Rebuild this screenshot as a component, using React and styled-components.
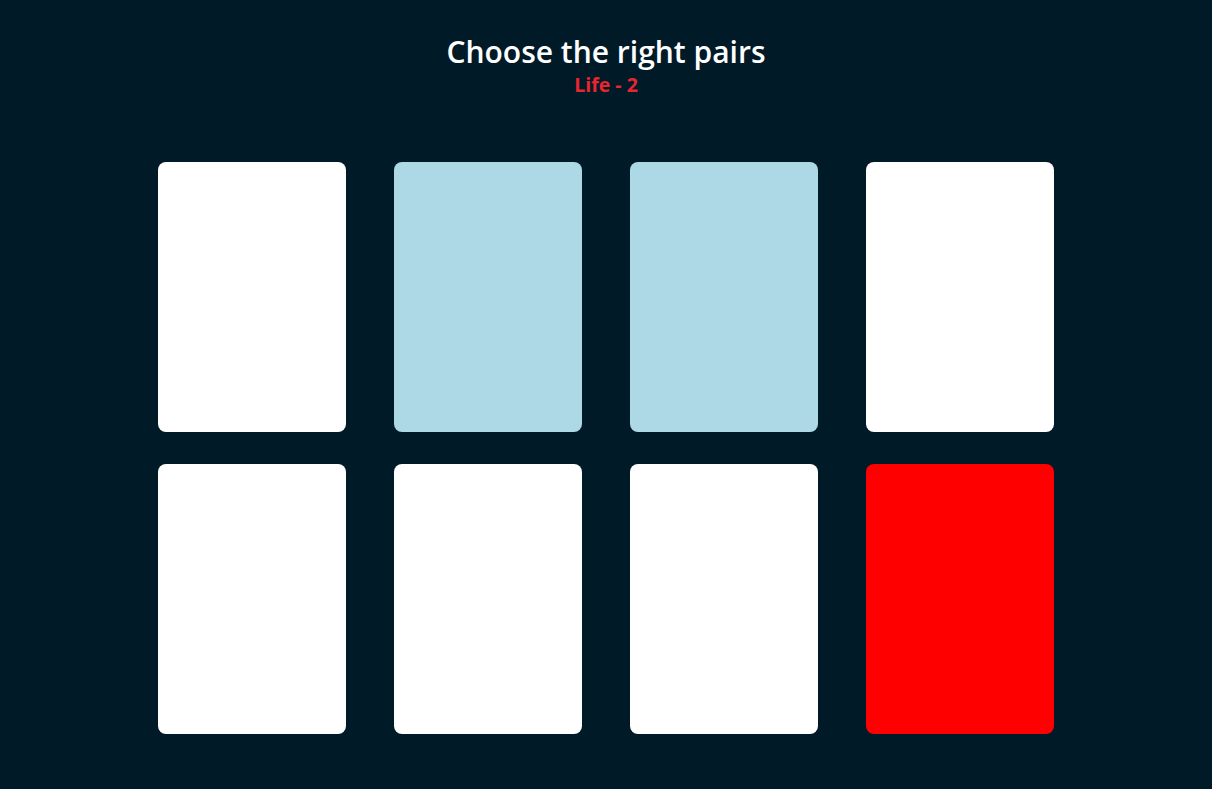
import React from 'react';
import styled, { createGlobalStyle } from 'styled-components';

const GlobalStyle = createGlobalStyle`
  html, body {
    margin: 0;
    padding: 0;
    background: #011a28;
  }
  body {
    font-family: 'Open Sans', sans-serif;
  }
`;

const Page = styled.div`
  min-height: 789px;
  display: flex;
  flex-direction: column;
  align-items: center;
  padding-top: 32px;
  box-sizing: border-box;
`;

const Title = styled.h1`
  margin: 0;
  color: #ffffff;
  font-size: 30px;
  font-weight: 600;
  line-height: 40px;
`;

const Life = styled.div`
  color: #e8262e;
  font-size: 19.5px;
  font-weight: 700;
  line-height: 26px;
`;

const Board = styled.div`
  display: grid;
  grid-template-columns: repeat(4, 188px);
  grid-auto-rows: 270px;
  column-gap: 48px;
  row-gap: 32px;
  margin-top: 64px;
`;

const colors = {
  hidden: '#ffffff',
  open: '#add8e6',
  wrong: '#ff0000',
};

const Card = styled.div`
  background: ${(props) => colors[props.state]};
  border-radius: 8px;
  cursor: pointer;
`;

const cards = ['hidden', 'open', 'open', 'hidden', 'hidden', 'hidden', 'hidden', 'wrong'];

const App = () => {
  return (
    <>
      <GlobalStyle />
      <Page>
        <Title>Choose the right pairs</Title>
        <Life>Life - 2</Life>
        <Board>
          {cards.map((state, i) => (
            <Card key={i} state={state} />
          ))}
        </Board>
      </Page>
    </>
  );
};

export default App;
